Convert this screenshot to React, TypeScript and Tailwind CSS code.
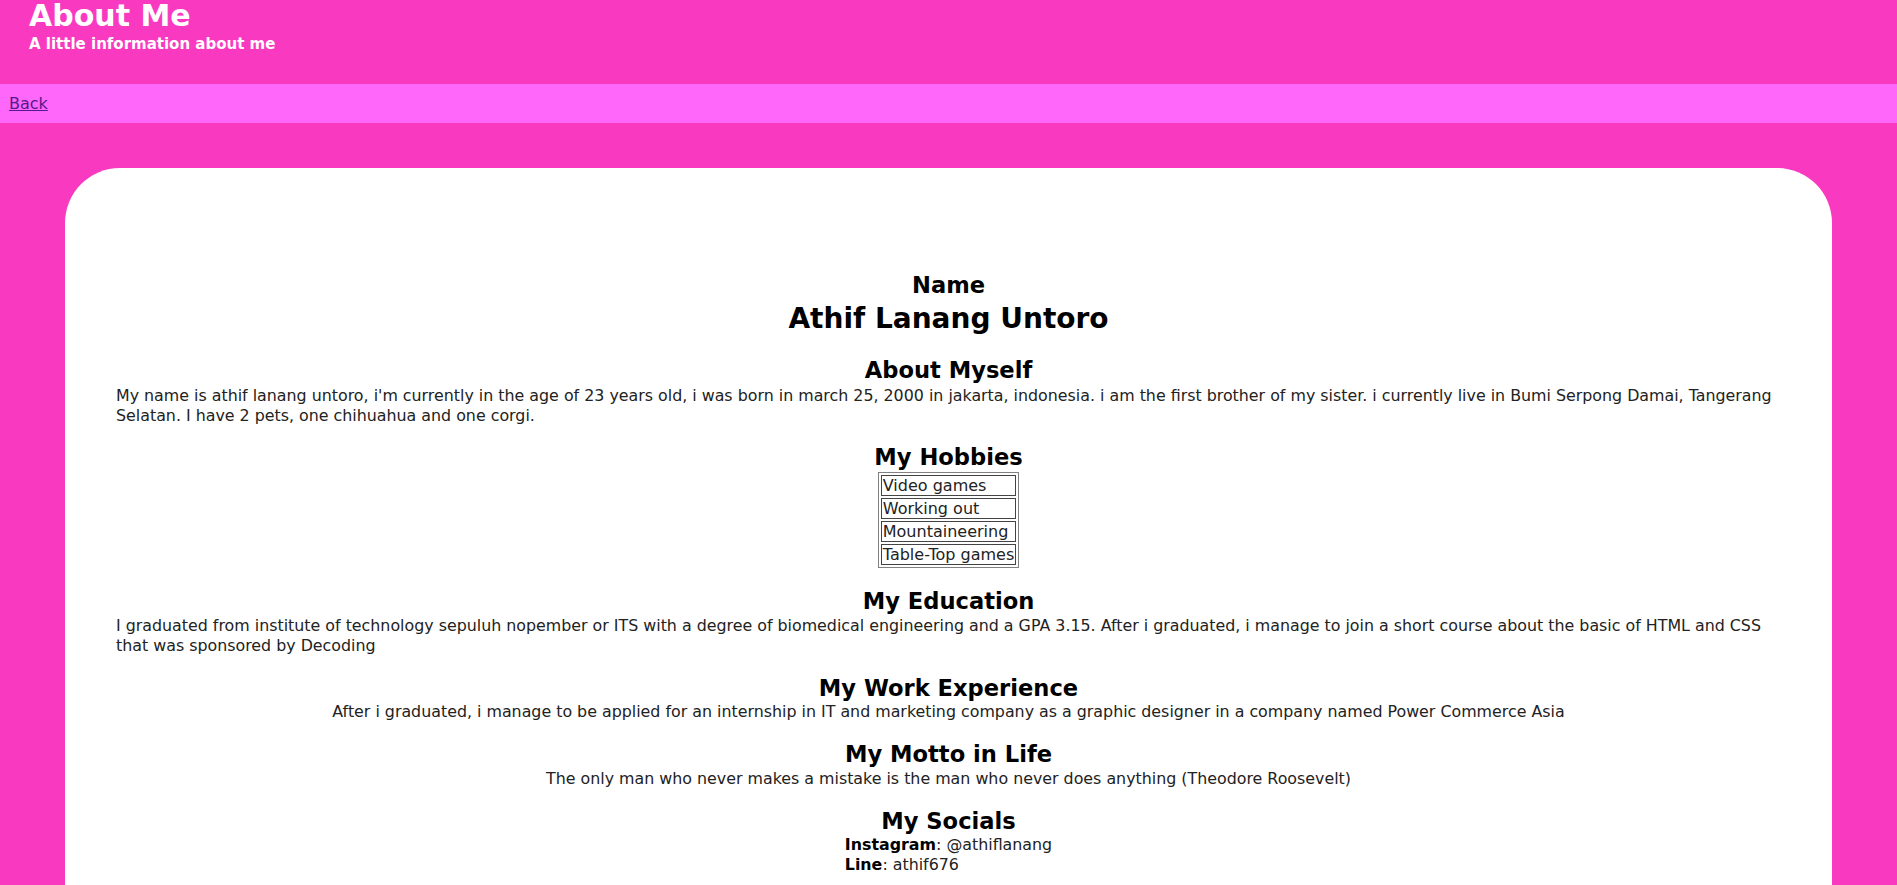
const hobbies = ["Video games", "Working out", "Mountaineering", "Table-Top games"];

function Heading({ children, className = "" }: { children: React.ReactNode; className?: string }) {
  return (
    <h2 className={`text-center text-[22.6px] font-bold leading-[27px] text-black ${className}`}>
      {children}
    </h2>
  );
}

export default function App() {
  return (
    <div className="min-h-screen bg-[#f93ac1] font-['DejaVu_Sans',sans-serif] text-[15.85px] text-[#222]">
      {/* ── Header ─────────────────────────────────────────────── */}
      <header className="h-[84px] pl-[29px] text-white">
        <h1 className="text-[30px] font-bold leading-[32px]">About Me</h1>
        <h3 className="mt-[2px] text-[15px] font-bold leading-[20px]">A little information about me</h3>
      </header>

      {/* ── Nav ────────────────────────────────────────────────── */}
      <nav className="flex h-[39px] items-center bg-[#ff66fa] px-[9px]">
        <a href="#" className="text-[16px] text-[#551a8b] underline">
          Back
        </a>
      </nav>

      {/* ── Card ───────────────────────────────────────────────── */}
      <main className="px-[65px] pt-[45px]">
        <div className="rounded-[55px] bg-white px-[51px] pt-[104px] pb-[120px] leading-[20px]">
          <Heading>Name</Heading>
          <p className="mt-[3px] text-center text-[28px] font-bold leading-[34px] text-black">
            Athif Lanang Untoro
          </p>

          <Heading className="mt-[21px]">About Myself</Heading>
          <p className="mt-[2px]">
            My name is athif lanang untoro, i'm currently in the age of 23 years old, i was born in march 25, 2000 in
            jakarta, indonesia. i am the first brother of my sister. i currently live in Bumi Serpong Damai, Tangerang
            Selatan. I have 2 pets, one chihuahua and one corgi.
          </p>

          <Heading className="mt-[18px]">My Hobbies</Heading>
          <table className="mx-auto mt-[1px] border-separate border-spacing-[2px] border border-[#808080] text-[16px]">
            <tbody>
              {hobbies.map((h) => (
                <tr key={h}>
                  <td className="border border-[#444] px-px py-0 leading-[19px]">{h}</td>
                </tr>
              ))}
            </tbody>
          </table>

          <Heading className="mt-[20px]">My Education</Heading>
          <p className="mt-[1px]">
            I graduated from institute of technology sepuluh nopember or ITS with a degree of biomedical engineering and
            a GPA 3.15. After i graduated, i manage to join a short course about the basic of HTML and CSS that was
            sponsored by Decoding
          </p>

          <Heading className="mt-[19px]">My Work Experience</Heading>
          <p className="text-center">
            After i graduated, i manage to be applied for an internship in IT and marketing company as a graphic designer
            in a company named Power Commerce Asia
          </p>

          <Heading className="mt-[19px]">My Motto in Life</Heading>
          <p className="mt-[1px] text-center">
            The only man who never makes a mistake is the man who never does anything (Theodore Roosevelt)
          </p>

          <Heading className="mt-[19px]">My Socials</Heading>
          <div className="mx-auto w-fit">
            <p>
              <b className="text-black">Instagram</b>: @athiflanang
            </p>
            <p>
              <b className="text-black">Line</b>: athif676
            </p>
          </div>
        </div>
      </main>
    </div>
  );
}
